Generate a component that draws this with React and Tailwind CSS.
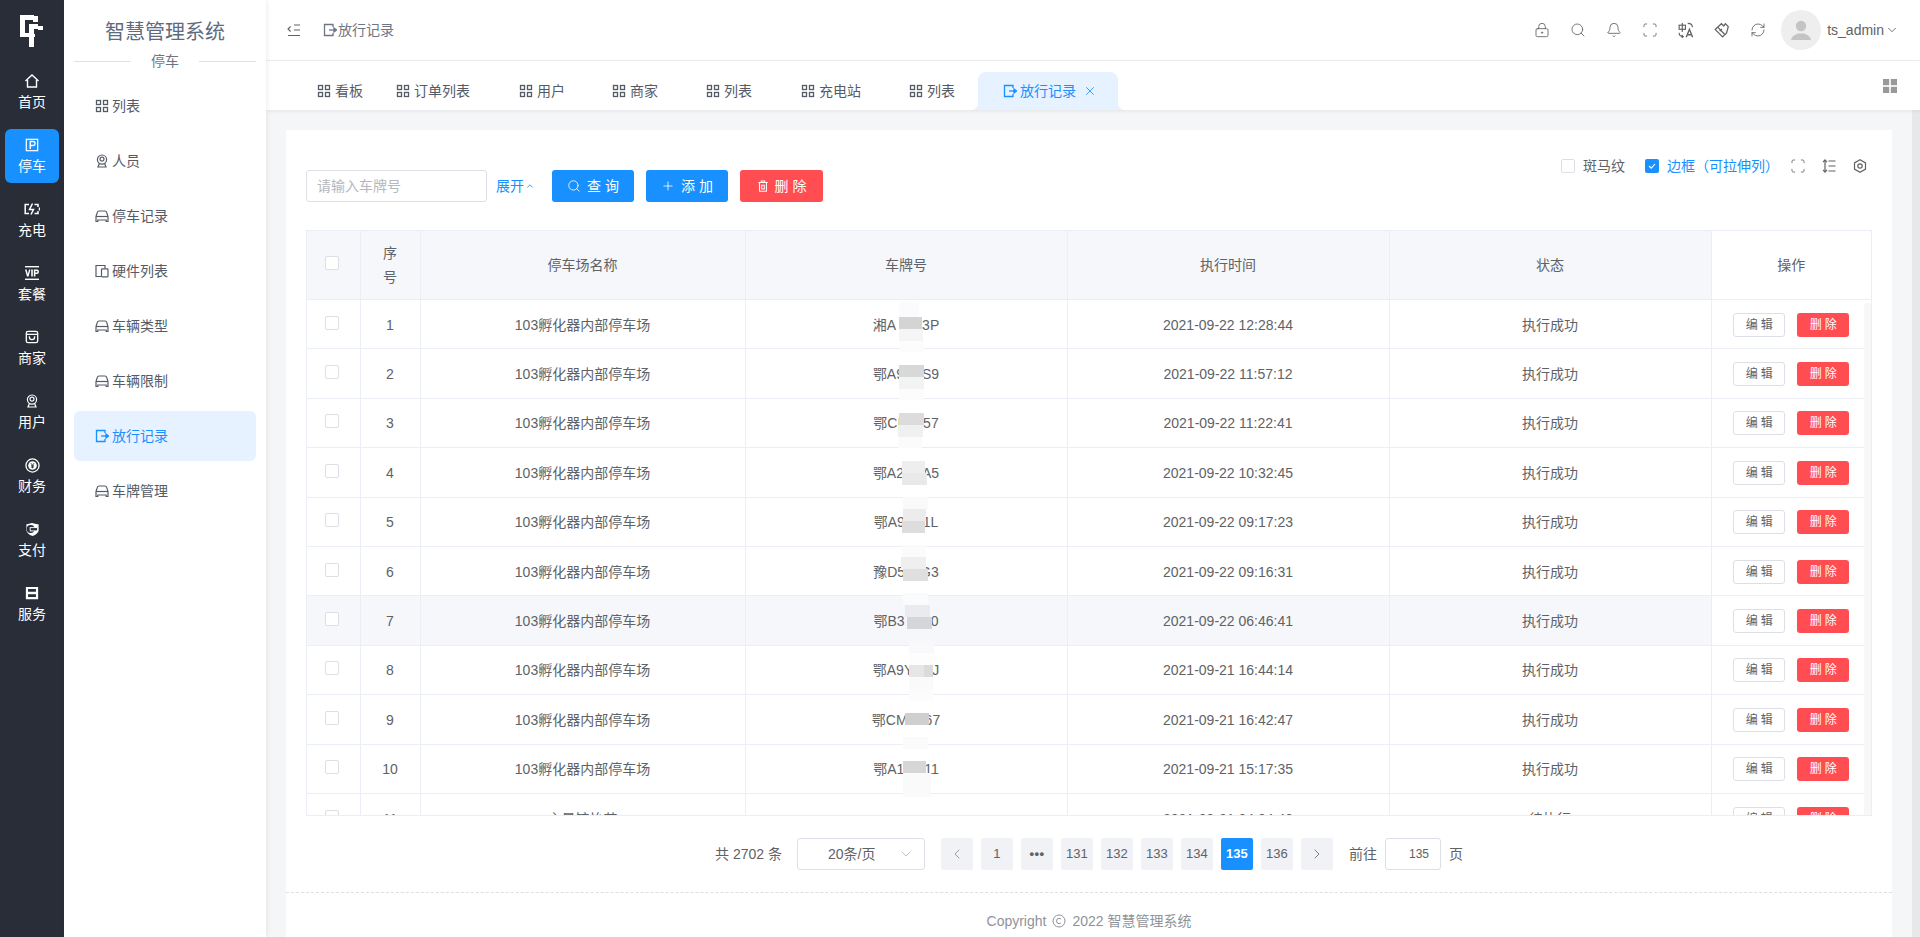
import {
  Bell,
  ChevronDown,
  ChevronLeft,
  ChevronRight,
  ChevronUp,
  LockKeyhole,
  Plus,
  RefreshCw,
  Scan,
  Search,
  X,
} from 'lucide-react';

const Squares = ({ className = 'w-[14px] h-[14px]' }) => (
  <svg viewBox="0 0 14 14" fill="none" stroke="currentColor" strokeWidth="1.3" className={className}>
    <rect x="1.5" y="1.5" width="4" height="4" />
    <rect x="8.5" y="1.5" width="4" height="4" />
    <rect x="1.5" y="8.5" width="4" height="4" />
    <rect x="8.5" y="8.5" width="4" height="4" />
  </svg>
);

const Car = () => (
  <svg viewBox="0 0 14 14" fill="none" stroke="currentColor" strokeWidth="1.2" className="w-[14px] h-[14px]">
    <path d="M1 7.5 2.4 3.2Q2.7 2 4 2H10Q11.3 2 11.6 3.2L13 7.5V12.5H11.2V11H2.8V12.5H1Z" />
    <path d="M1 7.5H13" />
  </svg>
);

const Person = ({ className = 'w-[14px] h-[14px]' }) => (
  <svg viewBox="0 0 14 14" fill="none" stroke="currentColor" strokeWidth="1.2" className={className}>
    <circle cx="7" cy="5.6" r="4.6" />
    <circle cx="7" cy="5.2" r="2" />
    <path d="M4.4 9.5 3 13H11L9.6 9.5" />
  </svg>
);

const Devices = () => (
  <svg viewBox="0 0 14 14" fill="none" stroke="currentColor" strokeWidth="1.2" className="w-[14px] h-[14px]">
    <path d="M6 12.5H1V1.5H10V4.5" />
    <rect x="6.5" y="4.8" width="6.5" height="8" rx="0.8" />
  </svg>
);

const Exit = ({ className = 'w-[14px] h-[14px]' }) => (
  <svg viewBox="0 0 14 14" fill="none" stroke="currentColor" strokeWidth="1.3" className={className}>
    <path d="M10 4V1.5H1.5V12.5H10V10" />
    <path d="M6 7H12" />
    <path d="M11 5 13.5 7 11 9Z" fill="currentColor" />
  </svg>
);

const Collapse = () => (
  <svg viewBox="0 0 14 14" fill="none" stroke="currentColor" strokeWidth="1.1" className="w-[14px] h-[14px]">
    <path d="M7 2H13M7 7H13M1 12.5H13" />
    <path d="M3.6 3.5 1 6 3.6 8.5" />
  </svg>
);

const SortLines = () => (
  <svg viewBox="0 0 14 14" fill="none" stroke="currentColor" strokeWidth="1.2" className="w-[14px] h-[14px]">
    <path d="M6.5 2H13.5M6.5 7H13.5M6.5 12H13.5" />
    <path d="M3 1V13" />
    <path d="M1 3.2 3 1 5 3.2M1 10.8 3 13 5 10.8" />
  </svg>
);

const Gear = () => (
  <svg viewBox="0 0 14 14" fill="none" stroke="currentColor" strokeWidth="1.2" className="w-[14px] h-[14px]">
    <path d="M7 .8 12.5 3.9V10.1L7 13.2 1.5 10.1V3.9Z" />
    <circle cx="7" cy="7" r="2.2" />
  </svg>
);

const Skin = () => (
  <svg viewBox="0 0 14 14" fill="none" stroke="currentColor" strokeWidth="1.1" className="w-4 h-4">
    <path d="M1 6.5 7.5 13 11 9.5 12.5 4 10 1.5 8.5 3.5 6.5 1.5Z" />
    <path d="M3.2 4.5 9.3 10.7M5 8 7 6" />
  </svg>
);

const Translate = () => (
  <svg viewBox="0 0 14 14" fill="none" stroke="currentColor" strokeWidth="1" className="w-4 h-4">
    <rect x="1" y="2.8" width="5.5" height="3.6" />
    <path d="M3.75 .8V8.8" />
    <path d="M1 9.5Q1 12.8 4.5 12.8M3.2 11.4 4.6 12.8 3.2 13.8" />
    <path d="M8.5 1.2Q12.6 1.2 12.6 4.6" />
    <path d="M7.2 13.4 10 6.4 12.8 13.4M8.2 11.2H11.8" strokeWidth="1.2" />
  </svg>
);

const Trash = () => (
  <svg viewBox="0 0 14 14" fill="none" stroke="currentColor" strokeWidth="1.2" className="w-[12px] h-[12px]">
    <path d="M1.5 3H12.5M5 3V1.2H9V3M3 3V13H11V3" />
    <path d="M5.5 6V10.5H8.5V6Z" />
  </svg>
);

const railIcons = {
  home: (
    <svg viewBox="0 0 16 16" fill="none" stroke="currentColor" strokeWidth="1.4" className="w-4 h-4">
      <path d="M1.5 8 8 2 14.5 8" />
      <path d="M3.5 7V14H12.5V7" />
    </svg>
  ),
  parking: (
    <svg viewBox="0 0 16 16" fill="none" stroke="currentColor" strokeWidth="1.4" className="w-[14px] h-[14px]">
      <rect x="1.5" y="1.5" width="13" height="13" />
      <path d="M6 12.5V4H9.5Q11.5 4 11.5 6.2T9.5 8.5H6" strokeWidth="1.6" />
    </svg>
  ),
  charge: (
    <svg viewBox="0 0 16 16" fill="none" stroke="currentColor" strokeWidth="1.5" className="w-4 h-4">
      <path d="M5 3.5H1.2V12.5H5M10.5 3.5H14V6M14 10V12.5H10.5" />
      <path d="M8.5 2.5 5.5 8.5H9.5L7 13.5" />
      <path d="M15.5 6.5V9.5" />
    </svg>
  ),
  vip: (
    <svg viewBox="0 0 16 16" className="w-4 h-4" fill="currentColor">
      <rect x="1" y="1" width="14" height="1.4" />
      <rect x="1" y="13.6" width="14" height="1.4" />
      <path d="M1 4.5H2.6L3.8 9 5 4.5H6.5L4.6 11.5H3ZM7.2 4.5H8.8V11.5H7.2ZM9.8 4.5H13Q15 4.5 15 6.7T13 9H11.4V11.5H9.8ZM11.4 5.9V7.6H12.7Q13.4 7.6 13.4 6.7T12.7 5.9Z" />
    </svg>
  ),
  shop: (
    <svg viewBox="0 0 16 16" fill="none" stroke="currentColor" strokeWidth="1.5" className="w-[14px] h-[14px]">
      <rect x="1.5" y="1.5" width="13" height="13" rx="2" />
      <path d="M1.5 5H14.5" />
      <path d="M5 7V8Q5 11 8 11T11 8V7" />
    </svg>
  ),
  user: <Person className="w-[14px] h-[14px]" />,
  finance: (
    <svg viewBox="0 0 16 16" className="w-[15px] h-[15px]">
      <circle cx="8" cy="8" r="7" fill="none" stroke="currentColor" strokeWidth="1.4" />
      <circle cx="8" cy="8" r="4.6" fill="currentColor" />
      <path d="M6.3 5.5 8 7.8 9.7 5.5M8 7.8V11M6.4 8.3H9.6M6.4 9.7H9.6" fill="none" stroke="#282d37" strokeWidth="0.9" />
    </svg>
  ),
  pay: (
    <svg viewBox="0 0 16 16" className="w-[15px] h-[15px]">
      <path d="M2 2.5 7.5 1 13 2.5H14.5V9Q14 12.5 8 15 2 12.5 1.5 9V2.5Z" fill="currentColor" />
      <circle cx="6" cy="7.5" r="4.2" fill="#282d37" />
      <rect x="5.5" y="6" width="8" height="3.5" fill="#282d37" stroke="currentColor" strokeWidth="1" />
    </svg>
  ),
  service: (
    <svg viewBox="0 0 16 16" fill="currentColor" className="w-[14px] h-[14px]">
      <path d="M1 1H15V15H1ZM3.5 3.5V6.5H12.5V3.5ZM3.5 9.5V12.5H12.5V9.5Z" fillRule="evenodd" />
    </svg>
  ),
};

const railItems = [
  ['首页', 'home'],
  ['停车', 'parking', true],
  ['充电', 'charge'],
  ['套餐', 'vip'],
  ['商家', 'shop'],
  ['用户', 'user'],
  ['财务', 'finance'],
  ['支付', 'pay'],
  ['服务', 'service'],
];

const menuItems = [
  ['列表', <Squares key="a" />],
  ['人员', <Person key="b" />],
  ['停车记录', <Car key="c" />],
  ['硬件列表', <Devices key="d" />],
  ['车辆类型', <Car key="e" />],
  ['车辆限制', <Car key="f" />],
  ['放行记录', <Exit key="g" />, true],
  ['车牌管理', <Car key="h" />],
];

const tabs = [
  ['看板', 'mr-[33px]'],
  ['订单列表', 'mr-[49px]'],
  ['用户', 'mr-[47px]'],
  ['商家', 'mr-[48px]'],
  ['列表', 'mr-[49px]'],
  ['充电站', 'mr-[48px]'],
  ['列表', 'mr-[23px]'],
];

const OK = '执行成功';
const PARK = '103孵化器内部停车场';
const rows = [
  [1, PARK, '湘A', '3P', 26, '2021-09-22 12:28:44', OK],
  [2, PARK, '鄂A9', 'S9', 18, '2021-09-22 11:57:12', OK],
  [3, PARK, '鄂CI', '657', 14, '2021-09-22 11:22:41', OK],
  [4, PARK, '鄂A2', 'A5', 18, '2021-09-22 10:32:45', OK],
  [5, PARK, '鄂A9', '1L', 18, '2021-09-22 09:17:23', OK],
  [6, PARK, '豫D5', 'G3', 15, '2021-09-22 09:16:31', OK],
  [7, PARK, '鄂B3', '0', 26, '2021-09-22 06:46:41', OK],
  [8, PARK, '鄂A9Y', 'J', 19, '2021-09-21 16:44:14', OK],
  [9, PARK, '鄂CM', '67', 17, '2021-09-21 16:42:47', OK],
  [10, PARK, '鄂A1', '11', 20, '2021-09-21 15:17:35', OK],
  [11, '主景馆怡苑', '', '', 0, '2021-09-21 04:04:40', '待执行'],
];

// mosaic over the plate numbers: x, y, w, h, colour (relative to the table body)
const patches = [
  [592, 2, 20, 15, '#fbfbfd'],
  [592, 17, 23, 12, '#d4d4d4'],
  [592, 29, 24, 12, '#f5f5f5'],
  [593, 41, 24, 11, '#fcfcfc'],
  [592, 65, 25, 12, '#d8d8d8'],
  [592, 77, 25, 12, '#f2f3f3'],
  [592, 89, 25, 11, '#fcfcfc'],
  [592, 113, 25, 12, '#dcdcdc'],
  [591, 125, 25, 12, '#eff0f0'],
  [591, 137, 24, 11, '#fbfbfb'],
  [595, 161, 23, 12, '#eeeeee'],
  [595, 173, 25, 12, '#e9e9e9'],
  [596, 197, 25, 12, '#fafafa'],
  [596, 209, 23, 12, '#ececec'],
  [595, 221, 23, 12, '#dddddd'],
  [595, 245, 24, 12, '#fbfbfb'],
  [594, 257, 25, 12, '#efefef'],
  [596, 269, 25, 12, '#dfdfdf'],
  [596, 293, 25, 12, '#fafbfc'],
  [598, 305, 25, 12, '#e9ebee'],
  [600, 317, 25, 12, '#d5d6da'],
  [602, 341, 25, 12, '#f9f9fb'],
  [602, 353, 25, 12, '#fdfdfd'],
  [602, 365, 15, 12, '#e6e6e6'],
  [617, 365, 9, 12, '#dcdada'],
  [602, 377, 24, 12, '#fafafa'],
  [602, 389, 24, 12, '#fcfcfc'],
  [598, 413, 24, 12, '#cfcfcf'],
  [596, 437, 25, 12, '#fbfbfb'],
  [596, 461, 23, 12, '#d6d6d6'],
  [596, 473, 28, 24, '#fafafa'],
];

const columns = 'grid grid-cols-[53.5px_60px_325px_322px_322px_322px_1fr]';
const cell = 'flex items-center justify-center border-r border-[#ebeef5] text-center';

const Checkbox = () => (
  <span className="block w-[14px] h-[14px] -translate-y-[2px] -translate-x-px rounded-[2px] border border-[#dcdfe6] bg-white" />
);

function Rail() {
  return (
    <aside className="w-16 shrink-0 bg-[#282d37] text-white flex flex-col items-center">
      <svg viewBox="20 15 24 32" fill="#fff" className="w-6 h-8 mt-[15px] mb-[18px]">
        <rect x="20" y="15" width="14" height="5" />
        <rect x="33" y="16" width="5" height="6" />
        <rect x="20" y="15" width="5" height="22" />
        <rect x="25" y="33" width="4" height="4" />
        <rect x="29" y="24" width="5" height="23" />
        <rect x="29" y="24" width="9" height="5" />
        <rect x="38" y="26" width="5" height="4" />
        <rect x="29" y="34" width="6" height="3" />
      </svg>
      {railItems.map(([label, icon, active]) => (
        <div
          key={label}
          className={`w-[54px] h-[54px] mb-[10px] flex flex-col items-center justify-center gap-[2px] rounded-md ${active ? 'bg-[#1890ff]' : ''}`}
        >
          <span className="h-[18px] flex items-center">{railIcons[icon]}</span>
          <span className="text-sm leading-[20px]">{label}</span>
        </div>
      ))}
    </aside>
  );
}

function SideMenu() {
  return (
    <aside className="w-[202px] shrink-0 bg-white relative z-20 shadow-[1px_0_5px_rgba(0,0,0,0.07)] flex flex-col px-[10px]">
      <div className="h-[51px] pt-[20px] text-center text-[20px] leading-6 text-[#5e6b7e]">智慧管理系统</div>
      <div className="h-[20px] flex items-center text-sm text-[#6a7485]">
        <span className="flex-1 h-px bg-[#dfe1ea]" />
        <span className="w-[68px] text-center">停车</span>
        <span className="flex-1 h-px bg-[#dfe1ea]" />
      </div>
      <nav className="mt-[10px] flex flex-col gap-[5px]">
        {menuItems.map(([label, icon, active]) => (
          <div
            key={label}
            className={`h-[50px] pl-[21px] flex items-center gap-[3px] rounded-md text-sm ${active ? 'bg-[#e6f2ff] text-[#1890ff]' : 'text-[#555b66]'}`}
          >
            {icon}
            <span>{label}</span>
          </div>
        ))}
      </nav>
    </aside>
  );
}

function Header() {
  const icon = 'w-4 h-4';
  return (
    <header className="h-[61px] shrink-0 border-b border-[#f0f1f3] bg-white flex items-center pl-[21px] pr-[21px] text-[#606266]">
      <Collapse />
      <span className="ml-[22px] mr-px text-[#6d7687]"><Exit /></span>
      <span className="text-sm text-[#6d7687]">放行记录</span>
      <div className="ml-auto flex items-center text-[#606266]">
        <div className="flex items-center gap-5 mr-[15px]">
          <LockKeyhole className={icon} strokeWidth={1.3} />
          <Search className={icon} strokeWidth={1.3} />
          <Bell className={icon} strokeWidth={1.3} />
          <Scan className={icon} strokeWidth={1.3} />
          <Translate />
          <Skin />
          <RefreshCw className={icon} strokeWidth={1.3} />
        </div>
        <span className="w-10 h-10 rounded-full bg-[#eeeeee] flex items-center justify-center overflow-hidden">
          <svg viewBox="0 0 24 24" fill="#c4c4c4" className="w-[24px] h-[24px]">
            <circle cx="12" cy="8" r="5.2" />
            <path d="M2 22Q2.5 17.5 9 15.5H15Q21.5 17.5 22 22Z" />
          </svg>
        </span>
        <span className="ml-[6px] text-sm">ts_admin</span>
        <ChevronDown className="w-[14px] h-[14px] ml-px" strokeWidth={1.5} />
      </div>
    </header>
  );
}

function TabBar() {
  return (
    <div className="h-[49px] shrink-0 bg-white relative z-10 shadow-[0_1px_4px_rgba(0,0,0,0.08)] flex items-end pl-[51px]">
      {tabs.map(([label, gap], i) => (
        <div key={i} className={`h-[38px] flex items-center gap-1 text-sm text-[#555b66] ${gap}`}>
          <Squares />
          <span>{label}</span>
        </div>
      ))}
      <div className="relative w-[140px] h-[38px] rounded-t-lg bg-[#e6f2ff] flex items-center pl-[25px] text-sm text-[#1890ff]">
        <span className="absolute -left-[7px] bottom-0 w-[7px] h-[7px] bg-[#e6f2ff]">
          <span className="block w-full h-full rounded-br-[7px] bg-white" />
        </span>
        <span className="absolute -right-[7px] bottom-0 w-[7px] h-[7px] bg-[#e6f2ff]">
          <span className="block w-full h-full rounded-bl-[7px] bg-white" />
        </span>
        <Exit />
        <span className="ml-[3px]">放行记录</span>
        <X className="w-[14px] h-[14px] ml-[7px]" strokeWidth={1.4} />
      </div>
      <svg viewBox="0 0 14 14" fill="#999" className="absolute right-[23px] top-[18px] w-[14px] h-[14px]">
        <rect width="6.2" height="6.2" />
        <rect x="7.8" width="6.2" height="6.2" />
        <rect y="7.8" width="6.2" height="6.2" />
        <rect x="7.8" y="7.8" width="6.2" height="6.2" />
      </svg>
    </div>
  );
}

function Toolbar() {
  return (
    <div className="h-[74px] flex justify-between items-start">
      <div className="mt-[14px] flex items-center">
        <div className="w-[181px] h-8 border border-[#dcdfe6] rounded-[3px] pl-[10px] flex items-center text-sm text-[#b4b8c0]">
          请输入车牌号
        </div>
        <span className="ml-[9px] text-sm text-[#1890ff] flex items-center">
          展开
          <ChevronUp className="w-[10px] h-[10px] ml-px" strokeWidth={2} />
        </span>
        <button className="ml-[17px] w-[82px] h-8 rounded-[3px] bg-[#1890ff] text-white text-sm flex items-center justify-center">
          <Search className="w-[14px] h-[14px] mr-[6px]" strokeWidth={1.4} />
          <span className="tracking-[4px] -mr-1">查询</span>
        </button>
        <button className="ml-3 w-[82px] h-8 rounded-[3px] bg-[#1890ff] text-white text-sm flex items-center justify-center">
          <Plus className="w-[14px] h-[14px] mr-[6px]" strokeWidth={1.4} />
          <span className="tracking-[4px] -mr-1">添加</span>
        </button>
        <button className="ml-3 w-[83px] h-8 rounded-[3px] bg-[#ff4d51] text-white text-sm flex items-center justify-center">
          <span className="mr-[6px]"><Trash /></span>
          <span className="tracking-[4px] -mr-1">删除</span>
        </button>
      </div>
      <div className="h-5 flex items-center text-[#606266] text-sm">
        <span className="w-[14px] h-[14px] rounded-[2px] border border-[#dcdfe6] bg-white" />
        <span className="ml-2">斑马纹</span>
        <span className="ml-5 w-[14px] h-[14px] rounded-[2px] bg-[#1890ff] flex items-center justify-center">
          <svg viewBox="0 0 10 10" fill="none" stroke="#fff" strokeWidth="1.1" className="w-[10px] h-[10px]">
            <path d="M2 5 4.2 7.2 8 3" />
          </svg>
        </span>
        <span className="ml-2 text-[#1890ff]">边框（可拉伸列）</span>
        <span className="ml-[11px]"><Scan className="w-4 h-4" strokeWidth={1.3} /></span>
        <span className="ml-4"><SortLines /></span>
        <span className="ml-[17px] mr-[5px]"><Gear /></span>
      </div>
    </div>
  );
}

function DataTable() {
  const bodyCell = `${cell} pt-px`;
  return (
    <div className="border-t border-l border-[#ebeef5] text-sm text-[#606266]">
      <div className={`${columns} h-[69px] border-b border-[#ebeef5] bg-[#f5f7fb]`}>
        <div className={cell}><Checkbox /></div>
        <div className={`${cell} px-5 leading-[24px]`}>序号</div>
        <div className={cell}>停车场名称</div>
        <div className={cell}>车牌号</div>
        <div className={cell}>执行时间</div>
        <div className={cell}>状态</div>
        <div className={`${cell} bg-white`}>操作</div>
      </div>
      <div className="relative h-[516px] overflow-hidden border-b border-[#ebeef5]">
        {rows.map(([no, name, plateA, plateB, gap, time, status]) => (
          <div
            key={no}
            className={`${columns} h-[49.4px] border-b border-[#ebeef5] ${no === 7 ? 'bg-[#f5f7fb]' : ''}`}
          >
            <div className={bodyCell}><Checkbox /></div>
            <div className={bodyCell}>{no}</div>
            <div className={bodyCell}>{name}</div>
            <div className={bodyCell}>
              <span>{plateA}</span>
              <span className="inline-block" style={{ width: gap }} />
              <span>{plateB}</span>
            </div>
            <div className={bodyCell}>{time}</div>
            <div className={bodyCell}>{status}</div>
            <div className={`${bodyCell} bg-white gap-3`}>
              <button className="w-[52px] h-6 rounded-[3px] border border-[#dcdfe6] bg-white text-xs tracking-[3px] pl-[3px]">编辑</button>
              <button className="w-[52px] h-6 rounded-[3px] bg-[#ff4d51] text-white text-xs tracking-[3px] pl-[3px]">删除</button>
            </div>
          </div>
        ))}
        {patches.map(([left, top, width, height, background], i) => (
          <span key={i} className="absolute" style={{ left, top, width, height, background }} />
        ))}
        <span className="absolute right-px top-[3px] bottom-0 w-[7px] bg-[#f7f7f7] rounded-t-[3px]" />
      </div>
    </div>
  );
}

function Pagination() {
  const pageBtn = 'w-8 h-8 rounded-[2px] bg-[#f0f2f5] flex items-center justify-center text-[13px]';
  return (
    <div className="h-[76px] flex items-center justify-center text-sm text-[#606266]">
      <span>共 2702 条</span>
      <div className="ml-[15px] w-[128px] h-8 border border-[#dcdfe6] rounded-[3px] flex items-center pl-[30px] pr-[10px] justify-between">
        <span>20条/页</span>
        <ChevronDown className="w-4 h-4 text-[#a8acb3]" strokeWidth={1.1} />
      </div>
      <div className="ml-4 flex items-center gap-2">
        <span className={pageBtn}><ChevronLeft className="w-4 h-4 text-[#808590]" strokeWidth={1.2} /></span>
        <span className={pageBtn}>1</span>
        <span className={`${pageBtn} font-bold tracking-[0.5px]`}>•••</span>
        {[131, 132, 133, 134].map((n) => (
          <span key={n} className={pageBtn}>{n}</span>
        ))}
        <span className={`${pageBtn} !bg-[#1890ff] text-white font-bold`}>135</span>
        <span className={pageBtn}>136</span>
        <span className={pageBtn}><ChevronRight className="w-4 h-4 text-[#606266]" strokeWidth={1.2} /></span>
      </div>
      <span className="ml-4">前往</span>
      <div className="ml-2 w-14 h-8 border border-[#dcdfe6] rounded-[3px] flex items-center justify-center pl-3 text-xs">135</div>
      <span className="ml-2">页</span>
    </div>
  );
}

export default function App() {
  return (
    <div className="flex h-screen w-screen overflow-hidden bg-white font-['Liberation_Sans','Noto_Sans_CJK_SC',sans-serif]">
      <Rail />
      <SideMenu />
      <main className="flex-1 min-w-0 flex flex-col">
        <Header />
        <TabBar />
        <div className="flex-1 min-h-0 flex overflow-hidden">
          <div className="flex-1 min-w-0 bg-[#f5f6f8] pt-5 px-5">
            <div className="bg-white pt-[26px]">
              <div className="px-5">
                <Toolbar />
                <DataTable />
                <Pagination />
              </div>
              <div className="h-[56px] border-t border-dashed border-[#dcdfe6] flex items-center justify-center text-sm text-[#909399]">
                <span>Copyright</span>
                <svg viewBox="0 0 14 14" fill="none" stroke="currentColor" strokeWidth="1" className="w-[14px] h-[14px] mx-[6px]">
                  <circle cx="7" cy="7" r="6" />
                  <path d="M9 5.2Q8.3 4.3 7 4.3 4.6 4.3 4.6 7T7 9.7Q8.3 9.7 9 8.8" />
                </svg>
                <span>2022 智慧管理系统</span>
              </div>
            </div>
          </div>
          <div className="w-2 shrink-0 bg-[#e8e8e8]" />
        </div>
      </main>
    </div>
  );
}
